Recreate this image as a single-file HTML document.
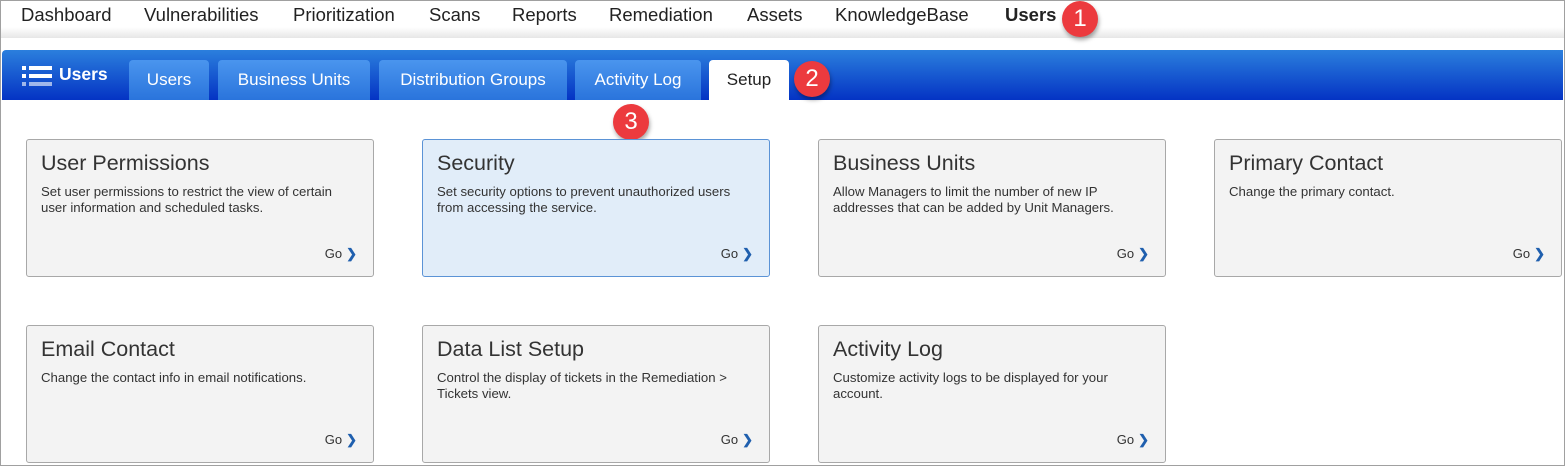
<!DOCTYPE html>
<html><head><style>
*{margin:0;padding:0;box-sizing:border-box}
body{width:1565px;height:466px;overflow:hidden;background:#fff;font-family:"Liberation Sans",Arial,sans-serif;position:relative}
.frame{position:absolute;left:0;top:0;width:1565px;height:466px;border:1px solid #a0a0a0;border-top:1px solid #a0a0a0}
.topnav{position:absolute;left:1px;top:1px;width:1563px;height:37px;background:linear-gradient(#fff 0,#fff 26px,#e6e6e6 37px)}
.nl{position:absolute;top:3px;font-size:18.5px;color:#222}
.bar{position:absolute;left:2px;top:50px;width:1561px;height:50px;background:linear-gradient(#2b7fdd,#0433c4);border-radius:4px 0 0 0}
.tab{position:absolute;top:10px;height:40px;background:linear-gradient(#4a95ee,#2a74dc);color:#fff;font-size:17px;text-align:center;line-height:40px;border-radius:4px 4px 0 0}
.tab.sel{background:#fff;color:#222}
.badge{position:absolute;width:36px;height:36px;border-radius:50%;background:#ec3a3e;color:#fff;font-size:24px;text-align:center;line-height:36px;box-shadow:1px 3px 4px rgba(0,0,0,.35)}
.card{position:absolute;width:348px;height:138px;background:#f3f3f3;border:1px solid #a8a8a8;border-radius:3px}
.card.hl{background:#e1edf9;border-color:#5b93d6}
.card h2{position:absolute;left:14px;top:11px;font-size:21.5px;font-weight:normal;color:#333}
.card p{position:absolute;left:14px;top:44px;width:300px;font-size:13.2px;line-height:15.5px;color:#333}
.go{position:absolute;right:16px;top:106px;font-size:13px;color:#333}
.go b{color:#1f5fae;font-size:13px;margin-left:4px}
</style></head><body>
<div class="topnav">
<span class="nl" style="left:20px">Dashboard</span>
<span class="nl" style="left:143px">Vulnerabilities</span>
<span class="nl" style="left:292px">Prioritization</span>
<span class="nl" style="left:428px">Scans</span>
<span class="nl" style="left:511px">Reports</span>
<span class="nl" style="left:608px">Remediation</span>
<span class="nl" style="left:746px">Assets</span>
<span class="nl" style="left:834px">KnowledgeBase</span>
<span class="nl" style="left:1004px;font-weight:bold">Users</span>
</div>
<div class="bar">
<svg style="position:absolute;left:20px;top:15px" width="30" height="22"><g fill="#fff"><rect x="0" y="1" width="4" height="4"/><rect x="7" y="1" width="23" height="4"/><rect x="0" y="9" width="4" height="4"/><rect x="7" y="9" width="23" height="4"/><rect x="0" y="17" width="4" height="4" opacity=".6"/><rect x="7" y="17" width="23" height="4" opacity=".6"/></g></svg>
<span style="position:absolute;left:57px;top:14px;color:#fff;font-weight:bold;font-size:17.5px">Users</span>
<div class="tab" style="left:127px;width:80px">Users</div>
<div class="tab" style="left:216px;width:152px">Business Units</div>
<div class="tab" style="left:377px;width:188px">Distribution Groups</div>
<div class="tab" style="left:573px;width:126px">Activity Log</div>
<div class="tab sel" style="left:707px;width:80px">Setup</div>
</div>
<div class="badge" style="left:1062px;top:1px">1</div>
<div class="badge" style="left:794px;top:61px">2</div>
<div class="badge" style="left:613px;top:104px">3</div>

<div class="card" style="left:26px;top:139px"><h2>User Permissions</h2><p>Set user permissions to restrict the view of certain user information and scheduled tasks.</p><span class="go">Go<b>❯</b></span></div>
<div class="card hl" style="left:422px;top:139px"><h2>Security</h2><p>Set security options to prevent unauthorized users from accessing the service.</p><span class="go">Go<b>❯</b></span></div>
<div class="card" style="left:818px;top:139px"><h2>Business Units</h2><p>Allow Managers to limit the number of new IP addresses that can be added by Unit Managers.</p><span class="go">Go<b>❯</b></span></div>
<div class="card" style="left:1214px;top:139px"><h2>Primary Contact</h2><p>Change the primary contact.</p><span class="go">Go<b>❯</b></span></div>
<div class="card" style="left:26px;top:325px"><h2>Email Contact</h2><p>Change the contact info in email notifications.</p><span class="go">Go<b>❯</b></span></div>
<div class="card" style="left:422px;top:325px"><h2>Data List Setup</h2><p>Control the display of tickets in the Remediation &gt; Tickets view.</p><span class="go">Go<b>❯</b></span></div>
<div class="card" style="left:818px;top:325px"><h2>Activity Log</h2><p>Customize activity logs to be displayed for your account.</p><span class="go">Go<b>❯</b></span></div>
<div class="frame"></div>
</body></html>
